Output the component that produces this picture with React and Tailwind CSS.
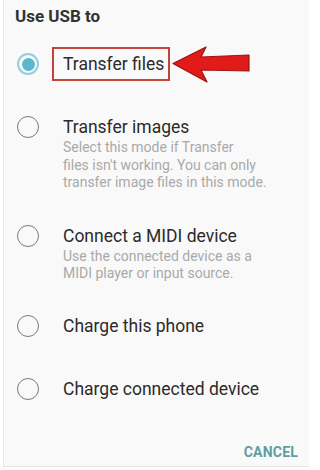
import React from 'react';

const Radio = ({ checked }) => (
    checked ? (
        <div className="w-[22px] h-[22px] rounded-full border-2 border-[#8fd0dc] flex items-center justify-center shrink-0">
            <div className="w-[13px] h-[13px] rounded-full bg-[#5cb6cc]" />
        </div>
    ) : (
        <div className="w-[22px] h-[22px] rounded-full border-[1.5px] border-[#7a7a7a] shrink-0" />
    )
);

const Arrow = () => (
    <svg className="absolute left-[109px] top-[-8px]" width="80" height="38" viewBox="0 0 80 38">
        <polygon
            points="1,17.5 34,1 29,11 77,9 77,25 29,24 35,36"
            fill="#e11a1a"
            stroke="#9e1414"
            strokeWidth="1.2"
            strokeLinejoin="round"
        />
    </svg>
);

const Option = ({ checked, title, sub, className = '', highlight }) => (
    <div className={`flex ${className}`}>
        <div className="h-[20px] flex items-center ml-[2px] mr-[24px]">
            <Radio checked={checked} />
        </div>
        <div>
            {highlight ? (
                <div className="relative h-[20px] flex items-center">
                    <span className="text-[17.5px] leading-[20px] text-[#2b2b2b]">{title}</span>
                    <div className="absolute left-[-11px] right-[-6px] top-[-7px] bottom-[-7px] border-2 border-[#c1443a]" />
                    <Arrow />
                </div>
            ) : (
                <div className="text-[17.5px] leading-[20px] text-[#2b2b2b]">{title}</div>
            )}
            {sub && (
                <div className="mt-[2px] text-[14px] leading-[17.5px] text-[#a9a9a9]">
                    {sub.map((line, i) => (
                        <div key={i}>{line}</div>
                    ))}
                </div>
            )}
        </div>
    </div>
);

export default function App() {
    return (
        <div className="w-[309px] h-[470px] bg-white" style={{ fontFamily: 'Roboto, "Liberation Sans", sans-serif' }}>
            <div className="ml-[3px] h-[467px] border-l border-b border-[#e6e6e6] bg-[#f9f9f9] pl-[11px] pr-[11px] flex flex-col">
                {/* Title */}
                <div className="mt-[6px] text-[17px] leading-[20px] font-bold text-[#333]">Use USB to</div>

                <Option checked highlight title="Transfer files" className="mt-[28px]" />
                <Option
                    title="Transfer images"
                    className="mt-[43px]"
                    sub={["Select this mode if Transfer", "files isn't working. You can only", "transfer image files in this mode."]}
                />
                <Option
                    title="Connect a MIDI device"
                    className="mt-[34px]"
                    sub={["Use the connected device as a", "MIDI player or input source."]}
                />
                <Option title="Charge this phone" className="mt-[33px]" />
                <Option title="Charge connected device" className="mt-[43px]" />

                {/* Footer */}
                <div className="mt-[43px] flex justify-end">
                    <button className="text-[14px] leading-[20px] font-bold text-[#5d9ea4] tracking-[0.2px]">CANCEL</button>
                </div>
            </div>
        </div>
    );
}
